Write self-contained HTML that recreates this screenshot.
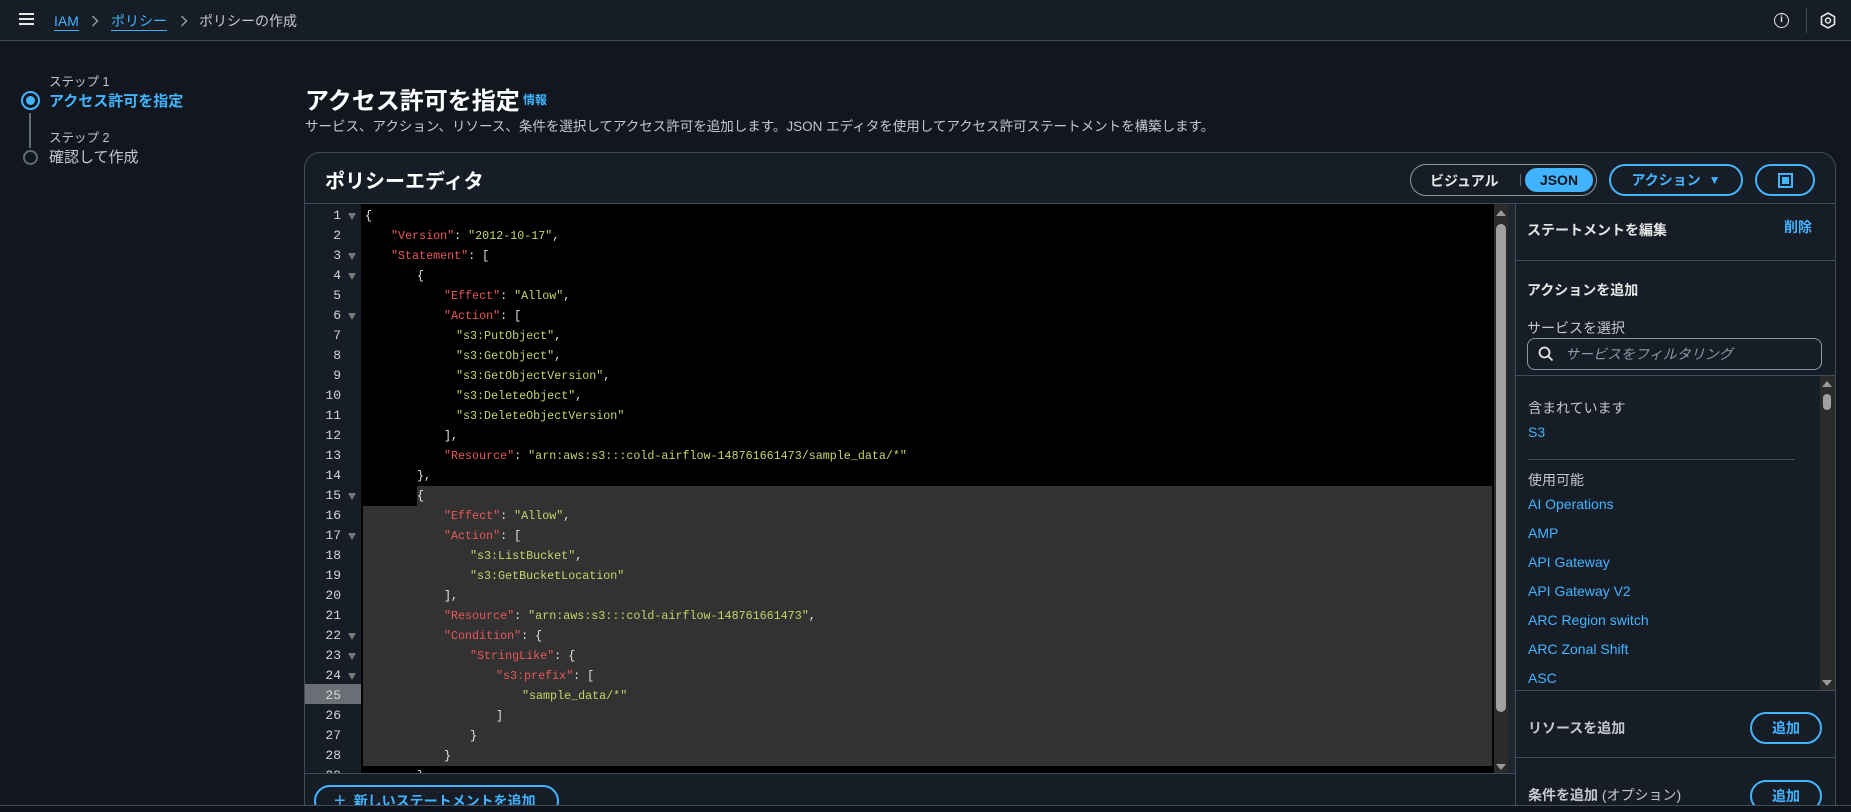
<!DOCTYPE html>
<html><head><meta charset="utf-8"><style>
*{box-sizing:border-box;margin:0;padding:0}
html{width:1851px;height:812px;overflow:hidden}
body{width:1851px;height:812px;overflow:hidden;background:#12171f;font-family:"Liberation Sans","Noto Sans CJK JP",sans-serif;color:#c6c6cd;position:relative}
#w{position:absolute;left:0;top:0;width:1851px;height:812px;overflow:hidden}
.a{position:absolute;white-space:nowrap}
.top{position:absolute;left:0;top:0;width:1851px;height:41px;background:#161d26;border-bottom:1px solid #414d5c}
.blue{color:#42b4ff}
.code{position:absolute;left:361px;top:204px;width:1133px;height:569px;background:#000;overflow:hidden;font-family:"Liberation Mono",monospace;font-size:11.7px;color:#e6e6e6}
.ln{position:absolute;height:20px;line-height:20px}
.k{color:#e8585a}.s{color:#c8d36a}
.gut{position:absolute;left:305px;top:204px;width:56px;height:569px;background:#161d26;overflow:hidden;font-family:"Liberation Mono",monospace;font-size:13px;color:#d5d5d5}
.gn{position:absolute;right:20px;height:20px;line-height:20px}
.tri{position:absolute;left:43px;width:0;height:0;border-left:4px solid transparent;border-right:4px solid transparent;border-top:7px solid #777}
.btn{position:absolute;border:2px solid #42b4ff;border-radius:16px;color:#42b4ff;font-weight:bold;font-size:14px;display:flex;align-items:center;justify-content:center}
.li{position:absolute;left:1528px;font-size:14px;color:#42b4ff}
</style></head><body><div id="w">
<div class="top"></div>
<div class="a" style="left:19px;top:13px;width:15px;height:2px;background:#e6e6e6;box-shadow:0 5px 0 #e6e6e6,0 10px 0 #e6e6e6"></div>
<div class="a blue" style="left:54px;top:13px;font-size:14px;border-bottom:1px solid #42b4ff;line-height:17px">IAM</div>
<svg class="a" style="left:91px;top:15px" width="8" height="12" viewBox="0 0 8 12"><path d="M1.5 1 L6.5 6 L1.5 11" fill="none" stroke="#8d99a8" stroke-width="1.5"/></svg>
<div class="a blue" style="left:111px;top:13px;font-size:14px;border-bottom:1px solid #42b4ff;line-height:17px">ポリシー</div>
<svg class="a" style="left:180px;top:15px" width="8" height="12" viewBox="0 0 8 12"><path d="M1.5 1 L6.5 6 L1.5 11" fill="none" stroke="#8d99a8" stroke-width="1.5"/></svg>
<div class="a" style="left:199px;top:13px;font-size:14px;color:#c6c6cd;line-height:17px">ポリシーの作成</div>
<div class="a" style="left:1774px;top:13px;width:15px;height:15px;border:1.5px solid #e6e6e6;border-radius:50%;font-size:10px;text-align:center;line-height:12px;color:#e6e6e6;font-weight:bold">i</div>
<div class="a" style="left:1806px;top:8px;width:1px;height:25px;background:#414d5c"></div>
<svg class="a" style="left:1820px;top:12px" width="16" height="17" viewBox="0 0 16 17"><path d="M8 1 L14.5 4.7 V12.3 L8 16 L1.5 12.3 V4.7 Z" fill="none" stroke="#e6e6e6" stroke-width="1.6"/><circle cx="8" cy="8.5" r="2.5" fill="none" stroke="#e6e6e6" stroke-width="1.5"/></svg>

<div class="a" style="left:49px;top:71px;font-size:12.5px;color:#c6c6cd">ステップ 1</div>
<div class="a" style="left:21px;top:91px;width:19px;height:19px;border:2px solid #42b4ff;border-radius:50%"></div>
<div class="a" style="left:26px;top:96px;width:9px;height:9px;background:#42b4ff;border-radius:50%"></div>
<div class="a" style="left:49px;top:90px;font-size:15px;font-weight:bold;color:#42b4ff">アクセス許可を指定</div>
<div class="a" style="left:29px;top:113px;width:2px;height:35px;background:#5f6b7a"></div>
<div class="a" style="left:49px;top:127px;font-size:12.5px;color:#c6c6cd">ステップ 2</div>
<div class="a" style="left:23px;top:150px;width:15px;height:15px;border:2px solid #5f6b7a;border-radius:50%"></div>
<div class="a" style="left:49px;top:146px;font-size:15px;color:#c6c6cd">確認して作成</div>

<div class="a" style="left:305px;top:81px;font-size:24px;font-weight:bold;color:#fff">アクセス許可を指定</div>
<div class="a blue" style="left:523px;top:91px;font-size:12px;font-weight:bold">情報</div>
<div class="a" style="left:305px;top:115px;font-size:13.5px;color:#c6c6cd">サービス、アクション、リソース、条件を選択してアクセス許可を追加します。JSON エディタを使用してアクセス許可ステートメントを構築します。</div>

<div class="a" style="left:304px;top:152px;width:1532px;height:700px;background:#161d26;border:1px solid #414d5c;border-radius:16px"></div>
<div class="a" style="left:305px;top:203px;width:1530px;height:1px;background:#414d5c"></div>
<div class="a" style="left:325px;top:165px;font-size:20px;font-weight:bold;color:#fff">ポリシーエディタ</div>
<div class="a" style="left:1410px;top:164px;width:187px;height:32px;border:1px solid #8d99a8;border-radius:16px"></div>
<div class="a" style="left:1430px;top:171px;font-size:14px;font-weight:bold;color:#e6e6e6">ビジュアル</div>
<div class="a" style="left:1520px;top:174px;width:1px;height:12px;background:#5f6b7a"></div>
<div class="a" style="left:1525px;top:168px;width:68px;height:24px;border-radius:12px;background:#42b4ff;color:#0f141a;font-size:14px;font-weight:bold;text-align:center;line-height:24px">JSON</div>
<div class="btn" style="left:1609px;top:164px;width:134px;height:32px">アクション&nbsp;&nbsp;<span style="font-size:12px">▼</span></div>
<div class="btn" style="left:1755px;top:164px;width:60px;height:32px"><div style="width:15px;height:15px;border:2px solid #42b4ff;padding:2px"><div style="width:7px;height:7px;background:#42b4ff"></div></div></div>

<div class="gut">
<div class="a" style="left:0;top:480px;width:56px;height:20px;background:#6b6f75"></div>
<div class="gn" style="top:2px">1</div><div class="tri" style="top:9px"></div>
<div class="gn" style="top:22px">2</div>
<div class="gn" style="top:42px">3</div><div class="tri" style="top:49px"></div>
<div class="gn" style="top:62px">4</div><div class="tri" style="top:69px"></div>
<div class="gn" style="top:82px">5</div>
<div class="gn" style="top:102px">6</div><div class="tri" style="top:109px"></div>
<div class="gn" style="top:122px">7</div>
<div class="gn" style="top:142px">8</div>
<div class="gn" style="top:162px">9</div>
<div class="gn" style="top:182px">10</div>
<div class="gn" style="top:202px">11</div>
<div class="gn" style="top:222px">12</div>
<div class="gn" style="top:242px">13</div>
<div class="gn" style="top:262px">14</div>
<div class="gn" style="top:282px">15</div><div class="tri" style="top:289px"></div>
<div class="gn" style="top:302px">16</div>
<div class="gn" style="top:322px">17</div><div class="tri" style="top:329px"></div>
<div class="gn" style="top:342px">18</div>
<div class="gn" style="top:362px">19</div>
<div class="gn" style="top:382px">20</div>
<div class="gn" style="top:402px">21</div>
<div class="gn" style="top:422px">22</div><div class="tri" style="top:429px"></div>
<div class="gn" style="top:442px">23</div><div class="tri" style="top:449px"></div>
<div class="gn" style="top:462px">24</div><div class="tri" style="top:469px"></div>
<div class="gn" style="top:482px">25</div>
<div class="gn" style="top:502px">26</div>
<div class="gn" style="top:522px">27</div>
<div class="gn" style="top:542px">28</div>
<div class="gn" style="top:562px">29</div>
</div>

<div class="code">
<div class="a" style="left:56px;top:282px;width:1075px;height:20px;background:#323232"></div>
<div class="a" style="left:2px;top:302px;width:1129px;height:260px;background:#323232"></div>
<div class="ln" style="left:4px;top:2px">{</div>
<div class="ln" style="left:30px;top:22px"><span class="k">"Version"</span>: <span class="s">"2012-10-17"</span>,</div>
<div class="ln" style="left:30px;top:42px"><span class="k">"Statement"</span>: [</div>
<div class="ln" style="left:56px;top:62px">{</div>
<div class="ln" style="left:83px;top:82px"><span class="k">"Effect"</span>: <span class="s">"Allow"</span>,</div>
<div class="ln" style="left:83px;top:102px"><span class="k">"Action"</span>: [</div>
<div class="ln s" style="left:95px;top:122px">"s3:PutObject"<span style="color:#e6e6e6">,</span></div>
<div class="ln s" style="left:95px;top:142px">"s3:GetObject"<span style="color:#e6e6e6">,</span></div>
<div class="ln s" style="left:95px;top:162px">"s3:GetObjectVersion"<span style="color:#e6e6e6">,</span></div>
<div class="ln s" style="left:95px;top:182px">"s3:DeleteObject"<span style="color:#e6e6e6">,</span></div>
<div class="ln s" style="left:95px;top:202px">"s3:DeleteObjectVersion"</div>
<div class="ln" style="left:83px;top:222px">],</div>
<div class="ln" style="left:83px;top:242px"><span class="k">"Resource"</span>: <span class="s">"arn:aws:s3:::cold-airflow-148761661473/sample_data/*"</span></div>
<div class="ln" style="left:56px;top:262px">},</div>
<div class="ln" style="left:56px;top:282px">{</div>
<div class="ln" style="left:83px;top:302px"><span class="k">"Effect"</span>: <span class="s">"Allow"</span>,</div>
<div class="ln" style="left:83px;top:322px"><span class="k">"Action"</span>: [</div>
<div class="ln s" style="left:109px;top:342px">"s3:ListBucket"<span style="color:#e6e6e6">,</span></div>
<div class="ln s" style="left:109px;top:362px">"s3:GetBucketLocation"</div>
<div class="ln" style="left:83px;top:382px">],</div>
<div class="ln" style="left:83px;top:402px"><span class="k">"Resource"</span>: <span class="s">"arn:aws:s3:::cold-airflow-148761661473"</span>,</div>
<div class="ln" style="left:83px;top:422px"><span class="k">"Condition"</span>: {</div>
<div class="ln" style="left:109px;top:442px"><span class="k">"StringLike"</span>: {</div>
<div class="ln" style="left:135px;top:462px"><span class="k">"s3:prefix"</span>: [</div>
<div class="ln s" style="left:161px;top:482px">"sample_data/*"</div>
<div class="ln" style="left:135px;top:502px">]</div>
<div class="ln" style="left:109px;top:522px">}</div>
<div class="ln" style="left:83px;top:542px">}</div>
<div class="ln" style="left:56px;top:562px">}</div>
</div>
<div class="a" style="left:1494px;top:204px;width:14px;height:569px;background:#2b2b2b"></div>
<div class="a" style="left:1496px;top:210px;border-left:5px solid transparent;border-right:5px solid transparent;border-bottom:6px solid #999"></div>
<div class="a" style="left:1496px;top:224px;width:10px;height:488px;background:#a0a0a0;border-radius:5px"></div>
<div class="a" style="left:1496px;top:764px;border-left:5px solid transparent;border-right:5px solid transparent;border-top:6px solid #999"></div>
<div class="a" style="left:1508px;top:204px;width:7px;height:569px;background:#1f2630"></div>
<div class="a" style="left:305px;top:773px;width:1210px;height:1px;background:#414d5c"></div>
<div class="btn" style="left:314px;top:785px;width:245px;height:32px;justify-content:flex-start;padding-left:18px;font-size:14px"><span style="font-size:20px;font-weight:normal;margin-right:8px">+</span>新しいステートメントを追加</div>

<div class="a" style="left:1515px;top:204px;width:1px;height:610px;background:#414d5c"></div>
<div class="a" style="left:1527px;top:220px;font-size:14px;font-weight:bold;color:#e6e6e6">ステートメントを編集</div>
<div class="a blue" style="left:1784px;top:217px;font-size:14px;font-weight:bold">削除</div>
<div class="a" style="left:1515px;top:260px;width:320px;height:1px;background:#414d5c"></div>
<div class="a" style="left:1527px;top:280px;font-size:14px;font-weight:bold;color:#e6e6e6">アクションを追加</div>
<div class="a" style="left:1527px;top:318px;font-size:14px;color:#c6c6cd">サービスを選択</div>
<div class="a" style="left:1527px;top:338px;width:295px;height:32px;border:1px solid #8d99a8;border-radius:8px"></div>
<svg class="a" style="left:1538px;top:346px" width="16" height="16" viewBox="0 0 16 16"><circle cx="6.5" cy="6.5" r="5" fill="none" stroke="#e6e6e6" stroke-width="1.8"/><path d="M10 10 L14.5 14.5" stroke="#e6e6e6" stroke-width="1.8"/></svg>
<div class="a" style="left:1565px;top:344px;font-size:14px;font-style:italic;color:#8d99a8">サービスをフィルタリング</div>
<div class="a" style="left:1515px;top:375px;width:320px;height:1px;background:#414d5c"></div>
<div class="a" style="left:1820px;top:376px;width:15px;height:314px;background:#2b2b2b"></div>
<div class="a" style="left:1822px;top:381px;border-left:5px solid transparent;border-right:5px solid transparent;border-bottom:6px solid #999"></div>
<div class="a" style="left:1823px;top:394px;width:8px;height:16px;background:#a0a0a0;border-radius:4px"></div>
<div class="a" style="left:1822px;top:680px;border-left:5px solid transparent;border-right:5px solid transparent;border-top:6px solid #999"></div>
<div class="a" style="left:1528px;top:398px;font-size:14px;color:#c6c6cd">含まれています</div>
<div class="li" style="top:424px">S3</div>
<div class="a" style="left:1528px;top:459px;width:267px;height:1px;background:#414d5c"></div>
<div class="a" style="left:1528px;top:470px;font-size:14px;color:#c6c6cd">使用可能</div>
<div class="li" style="top:496px">AI Operations</div>
<div class="li" style="top:525px">AMP</div>
<div class="li" style="top:554px">API Gateway</div>
<div class="li" style="top:583px">API Gateway V2</div>
<div class="li" style="top:612px">ARC Region switch</div>
<div class="li" style="top:641px">ARC Zonal Shift</div>
<div class="li" style="top:670px">ASC</div>
<div class="a" style="left:1515px;top:690px;width:320px;height:1px;background:#414d5c"></div>
<div class="a" style="left:1528px;top:718px;font-size:14px;font-weight:bold;color:#c6c6cd">リソースを追加</div>
<div class="btn" style="left:1750px;top:712px;width:72px;height:32px">追加</div>
<div class="a" style="left:1515px;top:757px;width:320px;height:1px;background:#414d5c"></div>
<div class="a" style="left:1528px;top:785px;font-size:14px;font-weight:bold;color:#c6c6cd">条件を追加 <span style="font-weight:normal">(オプション)</span></div>
<div class="btn" style="left:1750px;top:780px;width:72px;height:32px">追加</div>

<div class="a" style="left:0;top:805px;width:1851px;height:7px;background:#0f141a;border-top:1px solid #414d5c"></div>
</div></body></html>
